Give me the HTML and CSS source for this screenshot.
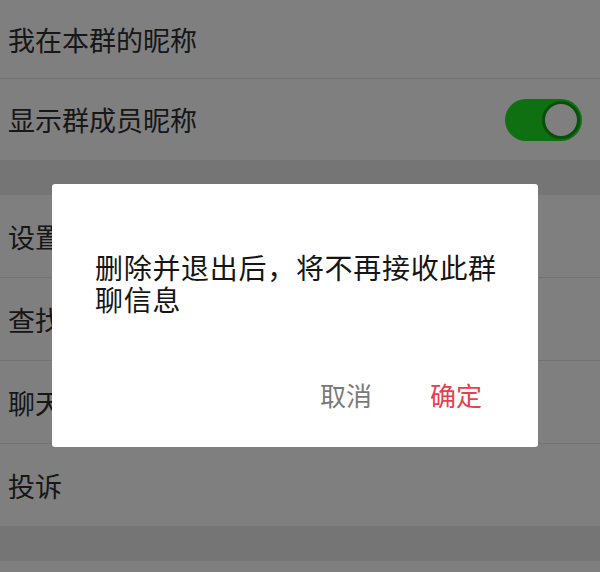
FILE: index.html
```html
<!DOCTYPE html>
<html lang="zh-CN">
<head>
    <meta charset="UTF-8">
    <meta name="viewport" content="width=device-width, initial-scale=1.0">
    <title>聊天信息</title>
    <link rel="stylesheet" href="styles.css">
</head>
<body>

    <div class="group">
        <div class="row row-first">我在本群的昵称</div>
        <div class="row row-short">
            <span>显示群成员昵称</span>
            <div class="switch on"><div class="knob"></div></div>
        </div>
    </div>

    <div class="group">
        <div class="row">设置当前聊天背景</div>
        <div class="row">查找聊天内容</div>
        <div class="row">聊天文件</div>
        <div class="row">投诉</div>
    </div>

    <div class="group">
        <div class="row"></div>
    </div>

    <!-- confirm box for leaving the group -->
    <div class="mask"></div>
    <div class="dialog">
        <p class="dialog-text">删除并退出后，将不再接收此群聊信息</p>
        <div class="dialog-buttons">
            <button class="btn-cancel">取消</button>
            <button class="btn-ok">确定</button>
        </div>
    </div>

</body>
</html>
```

FILE: styles.css
```css
body {
    font-family: "Noto Sans CJK SC", "Noto Sans", sans-serif;
    background: #ebebeb;
    margin: 0;
    padding: 0;
    color: #2e2e2e;
    overflow: hidden;
}
.group {
    background: white;
    margin-bottom: 35px;
}
.row {
    display: flex;
    align-items: center;
    justify-content: space-between;
    height: 82px;
    padding: 0 18px 0 8px;
    font-size: 27px;
    border-top: 1px solid #e6e6e6;
}
.group .row:first-child {
    border-top: none;
}
.row-first {
    height: 78px;
}
.row-short {
    height: 81px;
}
.switch {
    width: 77px;
    height: 42px;
    border-radius: 21px;
    background: #1ee022;
    display: flex;
    align-items: center;
    justify-content: flex-end;
    box-sizing: border-box;
    padding: 2px;
}
.knob {
    width: 38px;
    height: 38px;
    border-radius: 50%;
    background: white;
    box-sizing: border-box;
    border: 3px solid #139e16;
}
.mask {
    position: fixed;
    top: 0;
    left: 0;
    right: 0;
    bottom: 0;
    background: rgba(0, 0, 0, 0.5);
}
.dialog {
    position: absolute;
    top: 184px;
    left: 52px;
    width: 486px;
    height: 263px;
    box-sizing: border-box;
    background: white;
    border-radius: 3px;
    padding: 67px 36px 0 43px;
}
.dialog-text {
    margin: 0;
    font-size: 28px;
    line-height: 32px;
    letter-spacing: 0.7px;
    color: #151515;
}
.dialog-buttons {
    display: flex;
    justify-content: flex-end;
    gap: 58px;
    margin-top: 60px;
    padding-right: 20px;
}
.dialog-buttons button {
    background: none;
    border: none;
    padding: 0;
    font-family: inherit;
    font-size: 26px;
    line-height: 40px;
    cursor: pointer;
}
.btn-cancel {
    color: #7a7a7a;
}
.btn-ok {
    color: #e5404c;
}
```
